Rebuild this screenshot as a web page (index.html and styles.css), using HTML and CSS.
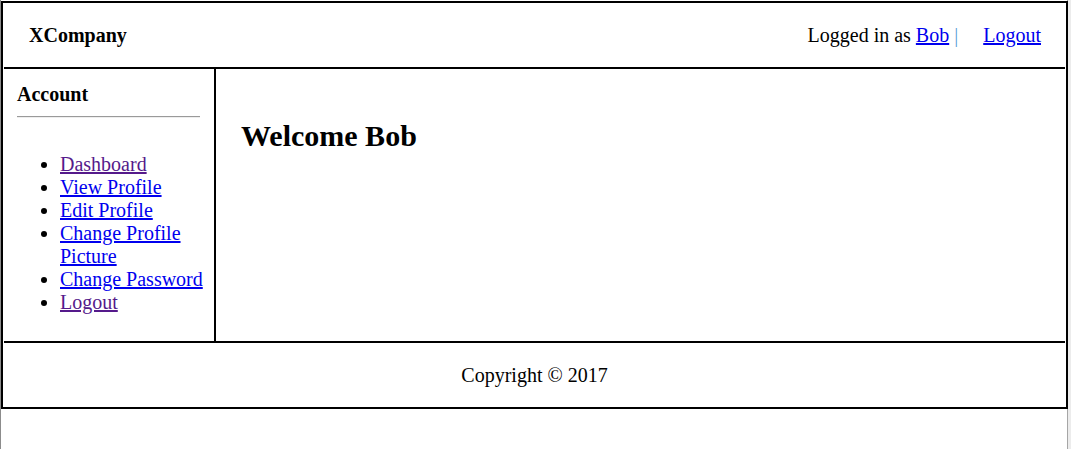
FILE: index.html
```html
<!DOCTYPE html>
<html lang="en">
<head>
<meta charset="utf-8">
<title>XCompany</title>
<link rel="stylesheet" href="styles.css">
</head>
<body>
<div class="frame">
  <header class="header">
    <div class="brand">XCompany</div>
    <div class="user-area">
      <span class="user">Logged in as <a href="#" class="link">Bob</a> <span class="sep">|</span></span>
      <a href="#" class="link logout">Logout</a>
    </div>
  </header>
  <div class="middle">
    <aside class="sidebar">
      <h4 class="side-title">Account</h4>
      <hr class="side-rule">
      <ul class="side-menu">
        <li><a href="#" class="link visited">Dashboard</a></li>
        <li><a href="#" class="link">View Profile</a></li>
        <li><a href="#" class="link">Edit Profile</a></li>
        <li><a href="#" class="link">Change Profile Picture</a></li>
        <li><a href="#" class="link">Change Password</a></li>
        <li><a href="#" class="link visited">Logout</a></li>
      </ul>
    </aside>
    <main class="content">
      <h2 class="welcome">Welcome Bob</h2>
    </main>
  </div>
  <footer class="footer">Copyright © 2017</footer>
</div>
</body>
</html>
```

FILE: styles.css
```css
html {
  background: #ffffff;
}

body {
  margin: 0;
  padding-top: 1px;
  min-height: 100vh;
  box-sizing: border-box;
  border-left: 1px solid #8c8c8c;
  box-shadow: inset -3px 0 0 #ececec, inset -4px 0 0 #a6a6a6;
  font-family: "Liberation Serif", "Times New Roman", serif;
  font-size: 20px;
  line-height: 23px;
  color: #000;
}

.frame {
  width: 1067px;
  box-sizing: border-box;
  border: 2px solid #000;
  padding: 1px 1px 0 1px;
}

.link {
  color: #0000ee;
  text-decoration: underline;
}

.link.visited {
  color: #551a8b;
}

.header {
  display: flex;
  justify-content: space-between;
  align-items: center;
  padding: 20px 24px 20px 25px;
  border-bottom: 2px solid #000;
}

.brand {
  font-weight: bold;
}

.user-area {
  display: flex;
  align-items: center;
}

.sep {
  color: #5b9bd5;
}

.logout {
  margin-left: 25px;
}

.middle {
  display: flex;
  border-bottom: 2px solid #000;
}

.sidebar {
  width: 212px;
  flex: none;
  box-sizing: border-box;
  border-right: 2px solid #000;
  padding: 14px 10px 0 13px;
}

.side-title {
  margin: 0;
  font-size: 20px;
  font-weight: bold;
}

.side-rule {
  margin: 10px 4px 0 0;
  border: 0;
  border-top: 1px solid #9a9a9a;
  border-bottom: 1px solid #eeeeee;
}

.side-menu {
  margin: 35px 0 27px;
  padding-left: 43px;
}

.content {
  flex: 1;
  padding: 25px;
}

.welcome {
  margin: 25px 0;
  font-size: 30px;
  line-height: 34px;
  font-weight: bold;
}

.footer {
  text-align: center;
  padding: 21px 0 20px;
}
```
